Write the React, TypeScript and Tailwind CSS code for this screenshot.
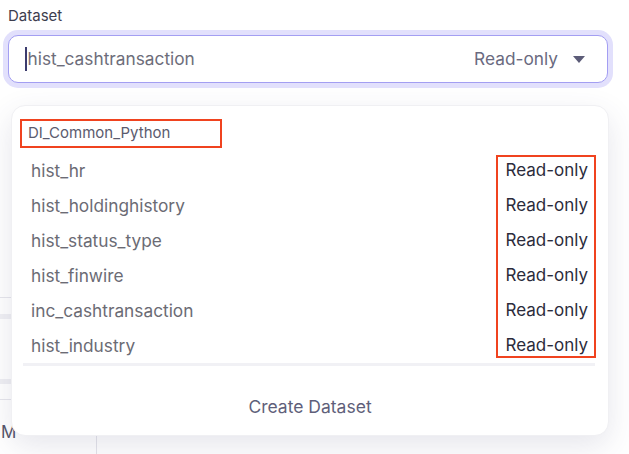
import React from "react";

const rows = [
  "hist_hr",
  "hist_holdinghistory",
  "hist_status_type",
  "hist_finwire",
  "inc_cashtransaction",
  "hist_industry",
];

export default function App() {
  return (
    <div
      className="relative w-[629px] h-[454px] overflow-hidden bg-white"
      style={{ fontFamily: "Inter, 'Noto Sans', sans-serif" }}
    >
      <div className="pt-[6px] pl-[8px] text-[15px] leading-[20px] text-[#3d3d4e]">Dataset</div>

      <div className="ml-[8px] mt-[9px] w-[600px] h-[48px] rounded-[10px] border-[1.5px] border-[#a39ef2] ring-[5px] ring-[#e2e0fc] bg-white flex items-center pl-[16px] pr-[22px]">
        <span className="w-[1.5px] h-[24px] bg-[#3c3c6e] mr-[1px]" />
        <span className="text-[17.3px] text-[#6d6d7a] flex-1">hist_cashtransaction</span>
        <span className="text-[17.3px] text-[#6a6a80]">Read-only</span>
        <svg width="12" height="7" viewBox="0 0 12 7" className="ml-[15px]">
          <path d="M0 0 H12 L6 7 Z" fill="#5c5c78" />
        </svg>
      </div>

      {/* background page content partly covered by the menu */}
      <div className="mt-[214px] flex flex-col">
        <div className="h-[1px] bg-[#e6e6ec] w-[40px]" />
        <div className="mt-[16px] h-[5px] bg-[#f0f0f4] w-[40px]" />
        <div className="mt-[60px] h-[5px] bg-[#efeff3] w-[40px]" />
        <div className="mt-[15px] h-[1px] bg-[#e6e6ec] w-[40px]" />
        <div className="mt-[20px] flex">
          <div className="w-[97px] border-r border-[#e4e4ea] h-[40px] text-[17px] text-[#55556a] pl-[1px]">M</div>
        </div>
      </div>

      {/* dropdown menu */}
      <div className="absolute left-[11px] top-[105px] w-[598px] h-[331px] rounded-[14px] bg-white border border-[#f0f0f3] shadow-[0_10px_30px_rgba(60,60,110,0.13)] flex flex-col">
        <div className="relative ml-[8px] mt-[13px] w-[202px] h-[29px] border-2 border-[#f0431f] flex items-center pl-[6px]">
          <span className="text-[15px] text-[#5b5b6e]">DI_Common_Python</span>
        </div>
        <div className="relative mt-[5px] flex flex-col">
          {rows.map((r) => (
            <div key={r} className="h-[35px] flex items-center justify-between pl-[19px] pr-[20px]">
              <span className="text-[17.3px] text-[#6b6b74]">{r}</span>
              <span className="text-[17px] text-[#2b2b3b]">Read-only</span>
            </div>
          ))}
          <div className="absolute right-[12px] top-[2px] w-[100px] h-[203px] border-2 border-[#f0431f]" />
        </div>
        <div className="ml-[11px] mr-[13px] h-[3px] bg-[#f1f1f5]" />
        <div className="flex-1 flex items-center justify-center pt-[13px]">
          <span className="text-[17.5px] text-[#5f5f7a]">Create Dataset</span>
        </div>
      </div>
    </div>
  );
}
